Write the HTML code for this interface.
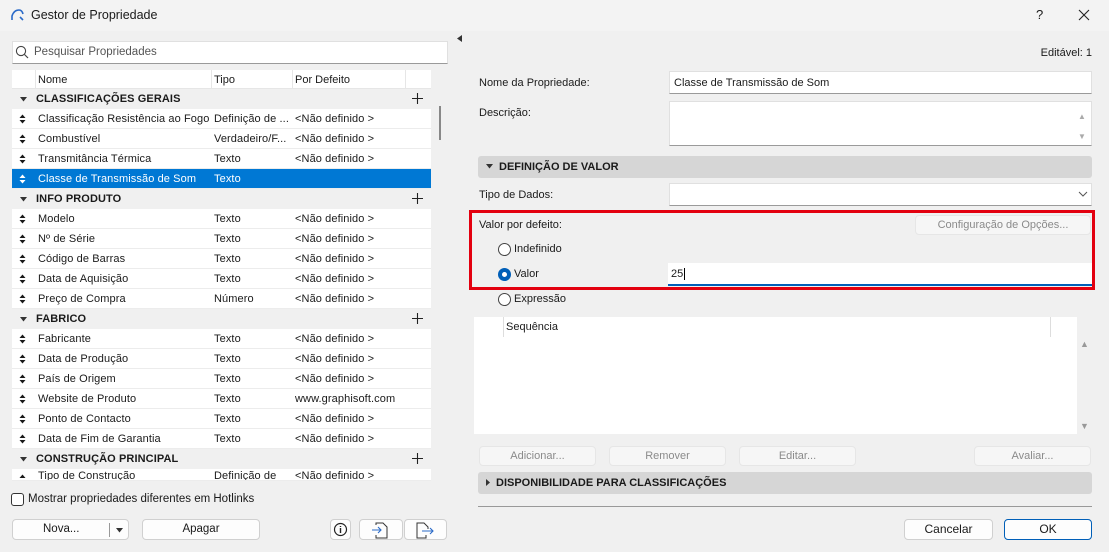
<!DOCTYPE html>
<html><head><meta charset="utf-8"><style>
*{box-sizing:border-box;margin:0;padding:0}
body{width:1109px;height:552px;overflow:hidden;background:#f0f0f0;font-family:"Liberation Sans",sans-serif;font-size:11.5px;color:#1a1a1a;position:relative}
.a{position:absolute}
.title{left:0;top:0;width:1109px;height:31px;background:#f3f3f3}
.inp{background:#fff;border:1px solid #e0e0e0;border-bottom:1px solid #9a9a9a}
.row{position:absolute;left:12px;width:419px;height:20px;background:#fff;border-bottom:1px solid #ececec;line-height:20px;white-space:nowrap;font-size:11px;letter-spacing:0.1px}
.row span{position:absolute}
.row .ar{left:7px;top:6px;width:6px;height:9px;background:
 linear-gradient(#000,#000) 0 0/0 0 no-repeat}
.grp{background:#f0f0f0;font-weight:bold;border-bottom:none}
.sel{background:#0078d4;color:#fff}
.btn{position:absolute;background:#fdfdfd;border:1px solid #d0d0d0;border-radius:4px;text-align:center;line-height:19px}
.dis{background:#f6f6f6;color:#8a8a8a;border-color:#e6e6e6}
.lbl{position:absolute;font-size:11px}
.rad{position:absolute;width:13px;height:13px;border:1px solid #444;border-radius:50%;background:#fff}
.hdr{position:absolute;background:#d6d6d6;border-radius:3px;font-weight:bold;font-size:11px;line-height:22px}
.plus{left:400px;top:4px;width:11px;height:11px}
</style></head><body>
<svg width="0" height="0" style="position:absolute"><defs>
<symbol id="s" viewBox="0 0 7 10"><path d="M0.5 4L3.5 0.5 6.5 4ZM0.5 6L3.5 9.5 6.5 6Z" fill="currentColor"/></symbol>
<symbol id="p" viewBox="0 0 11 11"><path d="M5.5 0V11M0 5.5H11" stroke="#222" stroke-width="1.1"/></symbol>
<symbol id="d" viewBox="0 0 7 5"><path d="M0 0H7L3.5 4.5Z" fill="#333"/></symbol>
</defs></svg>
<div class="a title"></div>
<svg class="a" style="left:10px;top:9px" width="14" height="12"><path d="M2 11 L2 7 Q4 1 9 1 Q12 1 13 5" fill="none" stroke="#2a6ac8" stroke-width="1.6"/><path d="M10 8 L13 11" stroke="#2a6ac8" stroke-width="1.6"/></svg>
<div class="a" style="left:31px;top:8px;font-size:12.5px">Gestor de Propriedade</div>
<div class="a" style="left:1036px;top:7px;font-size:13px">?</div>
<svg class="a" style="left:1078px;top:9px" width="12" height="12"><path d="M1 1L11 11M11 1L1 11" stroke="#222" stroke-width="1.1"/></svg>

<div class="a inp" style="left:12px;top:41px;width:436px;height:23px"></div>
<svg class="a" style="left:15px;top:45px" width="14" height="14"><circle cx="6" cy="6" r="4.6" fill="none" stroke="#444" stroke-width="1.1"/><path d="M9.5 9.5L13 13" stroke="#444" stroke-width="1.2"/></svg>
<div class="a" style="left:34px;top:46px;color:#555;font-size:11.5px">Pesquisar Propriedades</div>

<div class="a" style="left:12px;top:70px;width:419px;height:19px;background:#fff;border-bottom:1px solid #e6e6e6"></div>
<div class="a" style="left:35px;top:70px;width:1px;height:19px;background:#e6e6e6"></div>
<div class="a" style="left:211px;top:70px;width:1px;height:19px;background:#e6e6e6"></div>
<div class="a" style="left:292px;top:70px;width:1px;height:19px;background:#e6e6e6"></div>
<div class="a" style="left:405px;top:70px;width:1px;height:19px;background:#e6e6e6"></div>
<div class="a" style="left:38px;top:74px;font-size:11px">Nome</div>
<div class="a" style="left:214px;top:74px;font-size:11px">Tipo</div>
<div class="a" style="left:295px;top:74px;font-size:11px">Por Defeito</div>

<div>
<div class="row grp" style="top:89px"><svg class="a" style="left:8px;top:8px" width="7" height="5"><use href="#d"/></svg><span style="left:24px">CLASSIFICAÇÕES GERAIS</span><svg class="a plus" width="11" height="11"><use href="#p"/></svg></div>
<div class="row" style="top:109px"><svg class="a" style="left:7px;top:5px" width="7" height="10"><use href="#s"/></svg><span style="left:26px">Classificação Resistência ao Fogo</span><span style="left:202px">Definição de ...</span><span style="left:283px">&lt;Não definido &gt;</span></div>
<div class="row" style="top:129px"><svg class="a" style="left:7px;top:5px" width="7" height="10"><use href="#s"/></svg><span style="left:26px">Combustível</span><span style="left:202px">Verdadeiro/F...</span><span style="left:283px">&lt;Não definido &gt;</span></div>
<div class="row" style="top:149px"><svg class="a" style="left:7px;top:5px" width="7" height="10"><use href="#s"/></svg><span style="left:26px">Transmitância Térmica</span><span style="left:202px">Texto</span><span style="left:283px">&lt;Não definido &gt;</span></div>
<div class="row sel" style="top:169px"><svg class="a" style="left:7px;top:5px;color:#fff" width="7" height="10"><use href="#s"/></svg><span style="left:26px">Classe de Transmissão de Som</span><span style="left:202px">Texto</span></div>
<div class="row grp" style="top:189px"><svg class="a" style="left:8px;top:8px" width="7" height="5"><use href="#d"/></svg><span style="left:24px">INFO PRODUTO</span><svg class="a plus" width="11" height="11"><use href="#p"/></svg></div>
<div class="row" style="top:209px"><svg class="a" style="left:7px;top:5px" width="7" height="10"><use href="#s"/></svg><span style="left:26px">Modelo</span><span style="left:202px">Texto</span><span style="left:283px">&lt;Não definido &gt;</span></div>
<div class="row" style="top:229px"><svg class="a" style="left:7px;top:5px" width="7" height="10"><use href="#s"/></svg><span style="left:26px">Nº de Série</span><span style="left:202px">Texto</span><span style="left:283px">&lt;Não definido &gt;</span></div>
<div class="row" style="top:249px"><svg class="a" style="left:7px;top:5px" width="7" height="10"><use href="#s"/></svg><span style="left:26px">Código de Barras</span><span style="left:202px">Texto</span><span style="left:283px">&lt;Não definido &gt;</span></div>
<div class="row" style="top:269px"><svg class="a" style="left:7px;top:5px" width="7" height="10"><use href="#s"/></svg><span style="left:26px">Data de Aquisição</span><span style="left:202px">Texto</span><span style="left:283px">&lt;Não definido &gt;</span></div>
<div class="row" style="top:289px"><svg class="a" style="left:7px;top:5px" width="7" height="10"><use href="#s"/></svg><span style="left:26px">Preço de Compra</span><span style="left:202px">Número</span><span style="left:283px">&lt;Não definido &gt;</span></div>
<div class="row grp" style="top:309px"><svg class="a" style="left:8px;top:8px" width="7" height="5"><use href="#d"/></svg><span style="left:24px">FABRICO</span><svg class="a plus" width="11" height="11"><use href="#p"/></svg></div>
<div class="row" style="top:329px"><svg class="a" style="left:7px;top:5px" width="7" height="10"><use href="#s"/></svg><span style="left:26px">Fabricante</span><span style="left:202px">Texto</span><span style="left:283px">&lt;Não definido &gt;</span></div>
<div class="row" style="top:349px"><svg class="a" style="left:7px;top:5px" width="7" height="10"><use href="#s"/></svg><span style="left:26px">Data de Produção</span><span style="left:202px">Texto</span><span style="left:283px">&lt;Não definido &gt;</span></div>
<div class="row" style="top:369px"><svg class="a" style="left:7px;top:5px" width="7" height="10"><use href="#s"/></svg><span style="left:26px">País de Origem</span><span style="left:202px">Texto</span><span style="left:283px">&lt;Não definido &gt;</span></div>
<div class="row" style="top:389px"><svg class="a" style="left:7px;top:5px" width="7" height="10"><use href="#s"/></svg><span style="left:26px">Website de Produto</span><span style="left:202px">Texto</span><span style="left:283px">www.graphisoft.com</span></div>
<div class="row" style="top:409px"><svg class="a" style="left:7px;top:5px" width="7" height="10"><use href="#s"/></svg><span style="left:26px">Ponto de Contacto</span><span style="left:202px">Texto</span><span style="left:283px">&lt;Não definido &gt;</span></div>
<div class="row" style="top:429px"><svg class="a" style="left:7px;top:5px" width="7" height="10"><use href="#s"/></svg><span style="left:26px">Data de Fim de Garantia</span><span style="left:202px">Texto</span><span style="left:283px">&lt;Não definido &gt;</span></div>
<div class="row grp" style="top:449px"><svg class="a" style="left:8px;top:8px" width="7" height="5"><use href="#d"/></svg><span style="left:24px">CONSTRUÇÃO PRINCIPAL</span><svg class="a plus" width="11" height="11"><use href="#p"/></svg></div>
<div class="row" style="top:469px;height:12px;overflow:hidden"><svg class="a" style="left:7px;top:5px" width="7" height="10"><use href="#s"/></svg><span style="left:26px;top:-3px">Tipo de Construção</span><span style="left:202px;top:-3px">Definição de</span><span style="left:283px;top:-3px">&lt;Não definido &gt;</span></div>
</div>
<div class="a" style="left:439px;top:106px;width:2px;height:34px;background:#888"></div>

<div class="a" style="left:11px;top:493px;width:13px;height:13px;border:1px solid #333;border-radius:3px;background:#fff"></div>
<div class="a" style="left:28px;top:493px;font-size:11.5px">Mostrar propriedades diferentes em Hotlinks</div>
<div class="btn" style="left:12px;top:519px;width:117px;height:21px;font-size:11.5px"><span style="position:absolute;left:30px">Nova...</span><span style="position:absolute;left:96px;top:3px;width:1px;height:14px;background:#999"></span><svg style="position:absolute;left:103px;top:8px" width="7" height="5"><use href="#d"/></svg></div>
<div class="btn" style="left:142px;top:519px;width:118px;height:21px;font-size:11.5px">Apagar</div>
<div class="btn" style="left:330px;top:519px;width:21px;height:21px"><svg width="19" height="19" style="position:absolute;left:0;top:0"><circle cx="9.5" cy="9.5" r="6" fill="none" stroke="#222" stroke-width="1.2"/><path d="M9.5 8v5M9.5 6v1" stroke="#222" stroke-width="1.4"/></svg></div>
<div class="btn" style="left:359px;top:519px;width:44px;height:21px"><svg width="42" height="19" style="position:absolute;left:0;top:0"><path d="M16 5V3h7l4 4v11H16v-3" fill="none" stroke="#333"/><path d="M12 10h9M18 7l3 3-3 3" fill="none" stroke="#2a6ac8" stroke-width="1.1"/></svg></div>
<div class="btn" style="left:404px;top:519px;width:43px;height:21px"><svg width="42" height="19" style="position:absolute;left:0;top:0"><path d="M21 15v3H12V3h7l4 4v2" fill="none" stroke="#333"/><path d="M17 11h11M25 8l3 3-3 3" fill="none" stroke="#2a6ac8" stroke-width="1.1"/></svg></div>

<svg class="a" style="left:457px;top:35px" width="5" height="7"><path d="M5 0V7L0 3.5Z" fill="#333"/></svg>

<div class="lbl" style="right:17px;top:47px">Editável: 1</div>
<div class="lbl" style="left:479px;top:77px">Nome da Propriedade:</div>
<div class="a inp" style="left:669px;top:71px;width:423px;height:23px;padding:5px 4px;font-size:11px">Classe de Transmissão de Som</div>
<div class="lbl" style="left:479px;top:107px">Descrição:</div>
<div class="a inp" style="left:669px;top:101px;width:423px;height:45px"></div>
<div class="a" style="left:1078px;top:107px;font-size:8px;color:#aaa;line-height:20px">▲<br>▼</div>
<div class="hdr" style="left:478px;top:156px;width:614px;height:22px"><svg style="margin:0 6px 1px 8px" width="7" height="5"><use href="#d"/></svg>DEFINIÇÃO DE VALOR</div>
<div class="lbl" style="left:479px;top:189px">Tipo de Dados:</div>
<div class="a inp" style="left:669px;top:183px;width:423px;height:23px"></div>
<svg class="a" style="left:1078px;top:191px" width="10" height="7"><path d="M1 1l4 4 4-4" fill="none" stroke="#555"/></svg>

<div class="a" style="left:469px;top:210px;width:626px;height:80px;border:3px solid #e3000f"></div>
<div class="lbl" style="left:479px;top:219px">Valor por defeito:</div>
<div class="btn dis" style="left:915px;top:215px;width:176px;height:20px;font-size:11px">Configuração de Opções...</div>
<div class="rad" style="left:498px;top:243px"></div>
<div class="lbl" style="left:514px;top:243px">Indefinido</div>
<div class="rad" style="left:498px;top:268px;border:4px solid #005fb8"></div>
<div class="lbl" style="left:514px;top:268px">Valor</div>
<div class="a" style="left:668px;top:263px;width:424px;height:23px;background:#fff;border-bottom:2px solid #005fb8;padding:5px 3px;font-size:11px">25<span style="border-left:1px solid #000;margin-left:1px"></span></div>
<div class="rad" style="left:498px;top:293px"></div>
<div class="lbl" style="left:514px;top:293px">Expressão</div>

<div class="a" style="left:474px;top:317px;width:603px;height:117px;background:#fff"></div>
<div class="a" style="left:503px;top:317px;width:1px;height:20px;background:#ddd"></div>
<div class="a" style="left:1050px;top:317px;width:1px;height:20px;background:#ddd"></div>
<div class="lbl" style="left:506px;top:321px">Sequência</div>
<div class="a" style="left:1080px;top:339px;font-size:9px;color:#999">▲</div>
<div class="a" style="left:1080px;top:421px;font-size:9px;color:#999">▼</div>

<div class="btn dis" style="left:479px;top:446px;width:117px;height:20px;font-size:11px">Adicionar...</div>
<div class="btn dis" style="left:609px;top:446px;width:117px;height:20px;font-size:11px">Remover</div>
<div class="btn dis" style="left:739px;top:446px;width:117px;height:20px;font-size:11px">Editar...</div>
<div class="btn dis" style="left:974px;top:446px;width:117px;height:20px;font-size:11px">Avaliar...</div>
<div class="hdr" style="left:478px;top:472px;width:614px;height:22px"><svg style="margin:0 6px 0 8px" width="4" height="7"><path d="M0 0L4 3.5 0 7Z" fill="#333"/></svg>DISPONIBILIDADE PARA CLASSIFICAÇÕES</div>
<div class="a" style="left:478px;top:506px;width:614px;height:1px;background:#999"></div>
<div class="btn" style="left:904px;top:519px;width:89px;height:21px;font-size:12px">Cancelar</div>
<div class="btn" style="left:1004px;top:519px;width:88px;height:21px;font-size:12px;border-color:#005fb8">OK</div>
</body></html>
